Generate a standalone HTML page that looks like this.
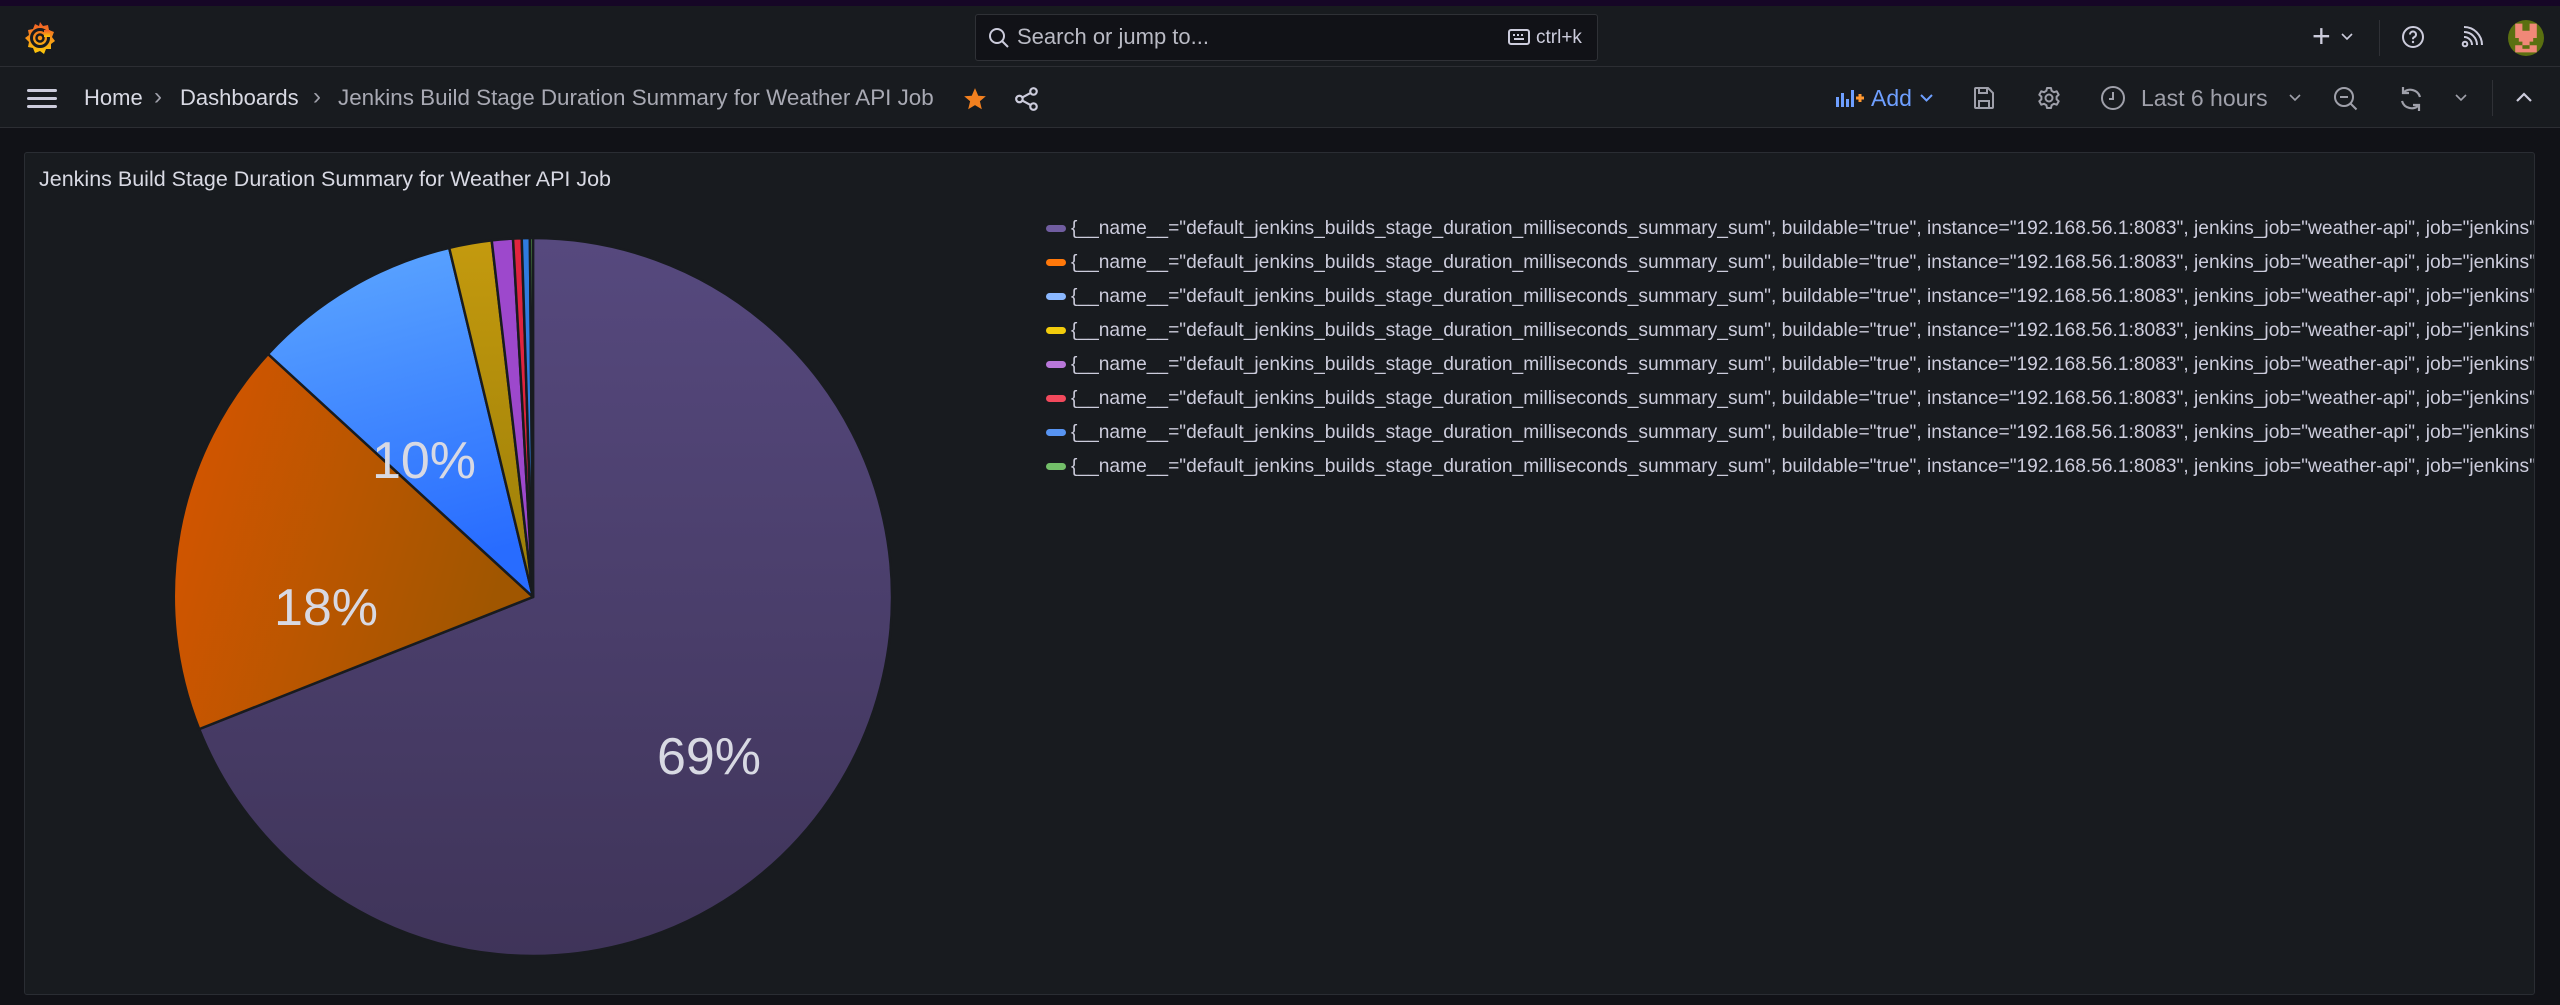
<!DOCTYPE html>
<html><head><meta charset="utf-8"><style>
*{margin:0;padding:0;box-sizing:border-box}
body{width:2560px;height:1005px;background:#111217;font-family:"Liberation Sans",sans-serif;color:#ccccdc;overflow:hidden;position:relative}
.abs{position:absolute}
.strip{left:0;top:0;width:2560px;height:6px;background:#160626}
.top{left:0;top:6px;width:2560px;height:61px;background:#181b1f;border-bottom:1px solid #2c2e33}
.bc{left:0;top:67px;width:2560px;height:61px;background:#181b1f;border-bottom:1px solid #2c2e33}
.search{left:975px;top:14px;width:623px;height:47px;background:#111217;border:1px solid #2f3136;border-radius:3px}
.t{position:absolute;white-space:nowrap;line-height:1}
.panel{left:24px;top:152px;width:2511px;height:843px;background:#181b1f;border:1px solid #2a2d33;border-radius:3px;overflow:hidden}
.lg{position:absolute;left:1046px;font-size:19.2px;color:#ccccdc;white-space:nowrap;line-height:1}
.sw{position:absolute;left:1021px;width:20px;height:7px;border-radius:4px}
</style></head><body>
<div class="abs strip"></div>
<div class="abs top"></div>
<div class="abs bc"></div>
<svg class="abs" style="left:22px;top:20px" width="36" height="36" viewBox="0 0 36 36">
<defs><linearGradient id="lg1" x1="0" y1="0" x2="0" y2="1"><stop offset="0" stop-color="#f05a28"/><stop offset="1" stop-color="#fbca0a"/></linearGradient></defs>
<path d="M18 2l3 4 5-1 1 5 5 2-2 5 3 4-4 3 0 5-5 0-2 5-4-3-5 2-2-5-5-1 1-5-4-4 4-3-1-5 5-1 2-5 4 2z" fill="url(#lg1)"/>
<circle cx="18" cy="18" r="8.5" fill="none" stroke="#181b1f" stroke-width="3"/>
<circle cx="18" cy="18" r="3.5" fill="none" stroke="#181b1f" stroke-width="2.5"/>
<rect x="22" y="10" width="6" height="7" fill="url(#lg1)"/>
</svg>
<div class="abs search"></div>
<svg class="abs" style="left:988px;top:27px" width="22" height="22" viewBox="0 0 22 22"><circle cx="9" cy="9" r="7" fill="none" stroke="#ccccdc" stroke-width="2"/><path d="M14 14l6 6" stroke="#ccccdc" stroke-width="2"/></svg>
<div class="t" style="left:1017px;top:26px;font-size:22px;color:#b9bac4">Search or jump to...</div>
<svg class="abs" style="left:1508px;top:28px" width="22" height="18" viewBox="0 0 22 18"><rect x="1" y="2" width="20" height="14" rx="2" fill="none" stroke="#ccccdc" stroke-width="2"/><path d="M5 7h2M9 7h2M13 7h2M6 11h10" stroke="#ccccdc" stroke-width="2"/></svg>
<div class="t" style="left:1536px;top:28px;font-size:19px;color:#ccccdc">ctrl+k</div>
<div class="t" style="left:2312px;top:20px;font-size:32px;color:#ccccdc">+</div>
<svg class="abs" style="left:2341px;top:33px" width="12" height="8"><path d="M1 1l5 5 5-5" stroke="#ccccdc" stroke-width="1.6" fill="none"/></svg>
<div class="abs" style="left:2379px;top:20px;width:1px;height:36px;background:#2f3136"></div>
<svg class="abs" style="left:2401px;top:25px" width="24" height="24" viewBox="0 0 24 24"><circle cx="12" cy="12" r="10" fill="none" stroke="#ccccdc" stroke-width="2"/><path d="M9 9.5a3 3 0 1 1 4 2.8c-1 .4-1 1-1 2" stroke="#ccccdc" stroke-width="2" fill="none"/><circle cx="12" cy="17" r="1.2" fill="#ccccdc"/></svg>
<svg class="abs" style="left:2461px;top:26px" width="22" height="22" viewBox="0 0 22 22"><circle cx="4" cy="18" r="2.3" fill="none" stroke="#ccccdc" stroke-width="2"/><path d="M3 11a8 8 0 0 1 8 8M3 6a13 13 0 0 1 13 13M3 1a18 18 0 0 1 18 18" stroke="#ccccdc" stroke-width="2" fill="none"/></svg>
<svg class="abs" style="left:2508px;top:20px" width="36" height="36" viewBox="0 0 10 10"><circle cx="5" cy="5" r="5" fill="#5a7010"/><path d="M2 1h2v2h2V1h2v4H7v1H6v1h2v2H2V7h2V6H3V5H2z" fill="#f08878"/><rect x="4" y="7" width="2" height="1" fill="#5a7010"/></svg>
<svg class="abs" style="left:27px;top:88px" width="30" height="22"><rect y="1" width="30" height="3" rx="1.5" fill="#ccccdc"/><rect y="9" width="30" height="3" rx="1.5" fill="#ccccdc"/><rect y="17" width="30" height="3" rx="1.5" fill="#ccccdc"/></svg>
<div class="t" style="left:84px;top:87px;font-size:22px;color:#d8d9e3">Home</div>
<div class="t" style="left:154px;top:85px;font-size:24px;color:#9fa0aa">›</div>
<div class="t" style="left:180px;top:87px;font-size:22px;color:#d8d9e3">Dashboards</div>
<div class="t" style="left:313px;top:85px;font-size:24px;color:#9fa0aa">›</div>
<div class="t" style="left:338px;top:87px;font-size:22.4px;color:#a8a9b3">Jenkins Build Stage Duration Summary for Weather API Job</div>
<svg class="abs" style="left:962px;top:86px" width="26" height="26" viewBox="0 0 24 24"><path d="M12 2l3 7 7 .5-5.5 4.6 1.8 7.4L12 17.6 5.7 21.5l1.8-7.4L2 9.5 9 9z" fill="#f2801f"/></svg>
<svg class="abs" style="left:1014px;top:86px" width="26" height="26" viewBox="0 0 24 24"><circle cx="5" cy="12" r="3" fill="none" stroke="#ccccdc" stroke-width="2"/><circle cx="18" cy="5" r="3" fill="none" stroke="#ccccdc" stroke-width="2"/><circle cx="18" cy="19" r="3" fill="none" stroke="#ccccdc" stroke-width="2"/><path d="M7.7 10.6l7.6-4.2M7.7 13.4l7.6 4.2" stroke="#ccccdc" stroke-width="2"/></svg>
<svg class="abs" style="left:1835px;top:89px" width="30" height="18" viewBox="0 0 30 18"><rect x="1" y="8" width="3" height="10" fill="#6e9fff"/><rect x="6" y="4" width="3" height="14" fill="#6e9fff"/><rect x="11" y="10" width="3" height="8" fill="#6e9fff"/><rect x="16" y="1" width="3" height="17" fill="#6e9fff"/><path d="M21 9h8M25 5v8" stroke="#ff9830" stroke-width="3"/></svg>
<div class="t" style="left:1871px;top:87px;font-size:23px;color:#6e9fff">Add</div>
<svg class="abs" style="left:1920px;top:94px" width="13" height="9"><path d="M1 1l5.5 5.5L12 1" stroke="#6e9fff" stroke-width="2" fill="none"/></svg>
<svg class="abs" style="left:1973px;top:86px" width="22" height="24" viewBox="0 0 22 24"><path d="M2 3a1 1 0 0 1 1-1h12l5 5v14a1 1 0 0 1-1 1H3a1 1 0 0 1-1-1z" fill="none" stroke="#9fa0aa" stroke-width="2"/><path d="M6 2v5h8V2M6 22v-7h10v7" fill="none" stroke="#9fa0aa" stroke-width="2"/></svg>
<svg class="abs" style="left:2037px;top:86px" width="24" height="24" viewBox="0 0 24 24"><circle cx="12" cy="12" r="3.5" fill="none" stroke="#9fa0aa" stroke-width="2"/><path d="M10 2h4l.6 2.8 2.4 1.4 2.7-.9 2 3.4-2.1 1.9v2.8l2.1 1.9-2 3.4-2.7-.9-2.4 1.4L14 22h-4l-.6-2.8L7 17.8l-2.7.9-2-3.4 2.1-1.9v-2.8L2.3 8.7l2-3.4 2.7.9 2.4-1.4z" fill="none" stroke="#9fa0aa" stroke-width="2" stroke-linejoin="round"/></svg>
<svg class="abs" style="left:2100px;top:85px" width="26" height="26" viewBox="0 0 26 26"><circle cx="13" cy="13" r="11" fill="none" stroke="#9fa0aa" stroke-width="2"/><path d="M13 7v7H9" fill="none" stroke="#9fa0aa" stroke-width="2"/></svg>
<div class="t" style="left:2141px;top:87px;font-size:23px;color:#9fa0aa">Last 6 hours</div>
<svg class="abs" style="left:2289px;top:94px" width="12" height="8"><path d="M1 1l5 5 5-5" stroke="#9fa0aa" stroke-width="1.6" fill="none"/></svg>
<svg class="abs" style="left:2333px;top:86px" width="26" height="26" viewBox="0 0 26 26"><circle cx="11" cy="11" r="9" fill="none" stroke="#9fa0aa" stroke-width="2"/><path d="M7 11h8M17.5 17.5l6 6" stroke="#9fa0aa" stroke-width="2"/></svg>
<svg class="abs" style="left:2398px;top:85px" width="26" height="28" viewBox="0 0 26 28"><path d="M5 8a10 10 0 0 1 17 4M21 20a10 10 0 0 1-17-4" fill="none" stroke="#9fa0aa" stroke-width="2.2"/><path d="M5 2v6h6M21 26v-6h-6" fill="none" stroke="#9fa0aa" stroke-width="2.2"/></svg>
<svg class="abs" style="left:2455px;top:94px" width="12" height="8"><path d="M1 1l5 5 5-5" stroke="#9fa0aa" stroke-width="1.6" fill="none"/></svg>
<div class="abs" style="left:2492px;top:80px;width:1px;height:36px;background:#2f3136"></div>
<svg class="abs" style="left:2516px;top:92px" width="16" height="10"><path d="M1 9l7-7 7 7" stroke="#ccccdc" stroke-width="2.2" fill="none"/></svg>
<div class="abs panel">
<div class="t" style="left:14px;top:16px;font-size:21.5px;color:#d8d9e3">Jenkins Build Stage Duration Summary for Weather API Job</div>
<div class="sw" style="top:72px;background:#705da0"></div><div class="lg" style="top:66px">{__name__="default_jenkins_builds_stage_duration_milliseconds_summary_sum", buildable="true", instance="192.168.56.1:8083", jenkins_job="weather-api", job="jenkins"}</div>
<div class="sw" style="top:106px;background:#ff780a"></div><div class="lg" style="top:100px">{__name__="default_jenkins_builds_stage_duration_milliseconds_summary_sum", buildable="true", instance="192.168.56.1:8083", jenkins_job="weather-api", job="jenkins"}</div>
<div class="sw" style="top:140px;background:#8ab8ff"></div><div class="lg" style="top:134px">{__name__="default_jenkins_builds_stage_duration_milliseconds_summary_sum", buildable="true", instance="192.168.56.1:8083", jenkins_job="weather-api", job="jenkins"}</div>
<div class="sw" style="top:174px;background:#f2cc0c"></div><div class="lg" style="top:168px">{__name__="default_jenkins_builds_stage_duration_milliseconds_summary_sum", buildable="true", instance="192.168.56.1:8083", jenkins_job="weather-api", job="jenkins"}</div>
<div class="sw" style="top:208px;background:#b877d9"></div><div class="lg" style="top:202px">{__name__="default_jenkins_builds_stage_duration_milliseconds_summary_sum", buildable="true", instance="192.168.56.1:8083", jenkins_job="weather-api", job="jenkins"}</div>
<div class="sw" style="top:242px;background:#f2495c"></div><div class="lg" style="top:236px">{__name__="default_jenkins_builds_stage_duration_milliseconds_summary_sum", buildable="true", instance="192.168.56.1:8083", jenkins_job="weather-api", job="jenkins"}</div>
<div class="sw" style="top:276px;background:#5794f2"></div><div class="lg" style="top:270px">{__name__="default_jenkins_builds_stage_duration_milliseconds_summary_sum", buildable="true", instance="192.168.56.1:8083", jenkins_job="weather-api", job="jenkins"}</div>
<div class="sw" style="top:310px;background:#73bf69"></div><div class="lg" style="top:304px">{__name__="default_jenkins_builds_stage_duration_milliseconds_summary_sum", buildable="true", instance="192.168.56.1:8083", jenkins_job="weather-api", job="jenkins"}</div>
</div>
<svg class="abs" style="left:0;top:0" width="1000" height="1005">
<defs>
<linearGradient id="gp" x1="0" y1="0" x2="0" y2="1"><stop offset="0" stop-color="#56497e"/><stop offset="1" stop-color="#3f3459"/></linearGradient>
<linearGradient id="go" x1="0" y1="0" x2="1" y2="0.3"><stop offset="0" stop-color="#d85500"/><stop offset="1" stop-color="#a05600"/></linearGradient>
<linearGradient id="gb" x1="0" y1="0" x2="0.2" y2="1"><stop offset="0" stop-color="#5ea8ff"/><stop offset="1" stop-color="#286cff"/></linearGradient>
<linearGradient id="gy" x1="0" y1="0" x2="0" y2="1"><stop offset="0" stop-color="#c49a0e"/><stop offset="1" stop-color="#9a7d08"/></linearGradient>
</defs>
<g stroke="#181b1f" stroke-width="2.5" stroke-linejoin="round">
<path d="M533 597L533 238A359 359 0 1 1 199.2 729.1Z" fill="url(#gp)"/>
<path d="M533 597L199.2 729.1A359 359 0 0 1 268 354Z" fill="url(#go)"/>
<path d="M533 597L268 354A359 359 0 0 1 449.2 247.9Z" fill="url(#gb)"/>
<path d="M533 597L449.2 247.9A359 359 0 0 1 491.7 240.4Z" fill="url(#gy)"/>
<path d="M533 597L491.7 240.4A359 359 0 0 1 513 238.6Z" fill="#9d48cc"/>
<path d="M533 597L513 238.6A359 359 0 0 1 521.7 238.2Z" fill="#e0243f"/>
<path d="M533 597L521.7 238.2A359 359 0 0 1 529.9 238Z" fill="#2f7be0"/>
<path d="M533 597L529.9 238A359 359 0 0 1 533 238Z" fill="#5aa64e"/>
</g>
<g fill="#d8d9e3" font-family="Liberation Sans, sans-serif" font-size="52" text-anchor="middle">
<text x="424" y="478">10%</text>
<text x="326" y="625">18%</text>
<text x="709" y="774">69%</text>
</g>
</svg>
</body></html>
